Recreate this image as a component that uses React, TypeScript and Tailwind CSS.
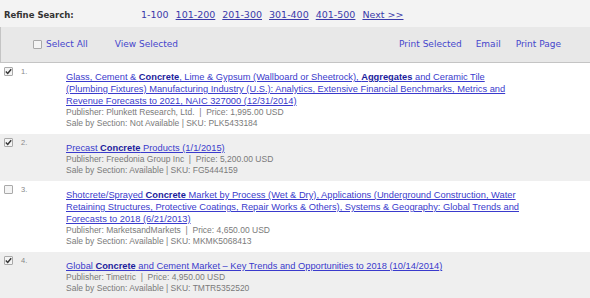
import React from 'react';

type Item = {
  n: number;
  checked: boolean;
  title: React.ReactNode;
  publisher: string;
  price: string;
  section: string;
  sku: string;
  shaded: boolean;
};

const B = ({ children }: { children: React.ReactNode }) => (
  <span className="font-bold text-[#1c1c9c]">{children}</span>
);

const items: Item[] = [
  {
    n: 1,
    checked: true,
    shaded: false,
    title: (
      <>
        Glass, Cement &amp; <B>Concrete</B>, Lime &amp; Gypsum (Wallboard or Sheetrock), <B>Aggregates</B> and Ceramic Tile
        <br />
        (Plumbing Fixtures) Manufacturing Industry (U.S.): Analytics, Extensive Financial Benchmarks, Metrics and
        <br />
        Revenue Forecasts to 2021, NAIC 327000 (12/31/2014)
      </>
    ),
    publisher: 'Plunkett Research, Ltd.',
    price: '1,995.00 USD',
    section: 'Not Available',
    sku: 'PLK5433184',
  },
  {
    n: 2,
    checked: true,
    shaded: true,
    title: (
      <>
        Precast <B>Concrete</B> Products (1/1/2015)
      </>
    ),
    publisher: 'Freedonia Group Inc',
    price: '5,200.00 USD',
    section: 'Available',
    sku: 'FG5444159',
  },
  {
    n: 3,
    checked: false,
    shaded: false,
    title: (
      <>
        Shotcrete/Sprayed <B>Concrete</B> Market by Process (Wet &amp; Dry), Applications (Underground Construction, Water
        <br />
        Retaining Structures, Protective Coatings, Repair Works &amp; Others), Systems &amp; Geography: Global Trends and
        <br />
        Forecasts to 2018 (6/21/2013)
      </>
    ),
    publisher: 'MarketsandMarkets',
    price: '4,650.00 USD',
    section: 'Available',
    sku: 'MKMK5068413',
  },
  {
    n: 4,
    checked: true,
    shaded: true,
    title: (
      <>
        Global <B>Concrete</B> and Cement Market – Key Trends and Opportunities to 2018 (10/14/2014)
      </>
    ),
    publisher: 'Timetric',
    price: '4,950.00 USD',
    section: 'Available',
    sku: 'TMTR5352520',
  },
];

function Box({ checked }: { checked: boolean }) {
  return (
    <span className="flex h-[9px] w-[9px] items-center justify-center rounded-[1px] border border-[#a9a9a9] bg-[#f4f4f4]">
      {checked && (
        <svg width="7" height="7" viewBox="0 0 7 7">
          <path d="M0.8 3.6 L2.7 5.5 L6.2 1.2" fill="none" stroke="#333" strokeWidth="1.4" />
        </svg>
      )}
    </span>
  );
}

export default function App() {
  const pages = ['101-200', '201-300', '301-400', '401-500', 'Next >>'];
  return (
    <div className="w-[590px] h-[298px] overflow-hidden bg-white">
      <div className="font-['DejaVu_Sans',Verdana,sans-serif] text-[9px]">
        <div className="flex h-[27px] items-center bg-[#f3f3f3] pl-[4px] pt-[3px]">
          <span className="w-[137px] text-[8.5px] font-bold text-[#333]">Refine Search:</span>
          <span className="text-[9.5px] text-[#3a3aaa]">1-100</span>
          {pages.map((p) => (
            <a key={p} className="ml-[7px] text-[9.5px] text-[#3a3aaa] underline">
              {p}
            </a>
          ))}
        </div>
        <div className="flex h-[36px] items-center border-b border-l border-[#c4c4c4] bg-[#e8e8e8] pr-[29px]">
          <span className="ml-[32px] mr-[4px]">
            <Box checked={false} />
          </span>
          <span className="text-[#4646cc]">Select All</span>
          <span className="ml-[27px] text-[#4646cc]">View Selected</span>
          <span className="ml-auto text-[#4646cc]">Print Selected</span>
          <span className="ml-[14px] text-[#4646cc]">Email</span>
          <span className="ml-[15px] text-[#4646cc]">Print Page</span>
        </div>
      </div>
      <div className="font-['Liberation_Sans',Arial,sans-serif]">
        {items.map((it) => (
          <div key={it.n} className={`flex pt-[8px] pb-[5px] ${it.shaded ? 'bg-[#efefef]' : 'bg-white'}`}>
            <div className="-mt-[4px] flex w-[66px] shrink-0 items-start pl-[4px]">
              <Box checked={it.checked} />
              <span className="ml-[8px] text-[7.5px] leading-[9px] text-[#888]">{it.n}.</span>
            </div>
            <div className="w-[500px]">
              <a className="block whitespace-nowrap text-[9.3px] leading-[12px] text-[#3a3acc] underline">{it.title}</a>
              <div className="text-[8.5px] leading-[11px] text-[#7a7a7a]">
                Publisher: {it.publisher} &nbsp;|&nbsp; Price: {it.price}
              </div>
              <div className="text-[8.5px] leading-[11px] text-[#7a7a7a]">
                Sale by Section: {it.section} | SKU: {it.sku}
              </div>
            </div>
          </div>
        ))}
      </div>
    </div>
  );
}
